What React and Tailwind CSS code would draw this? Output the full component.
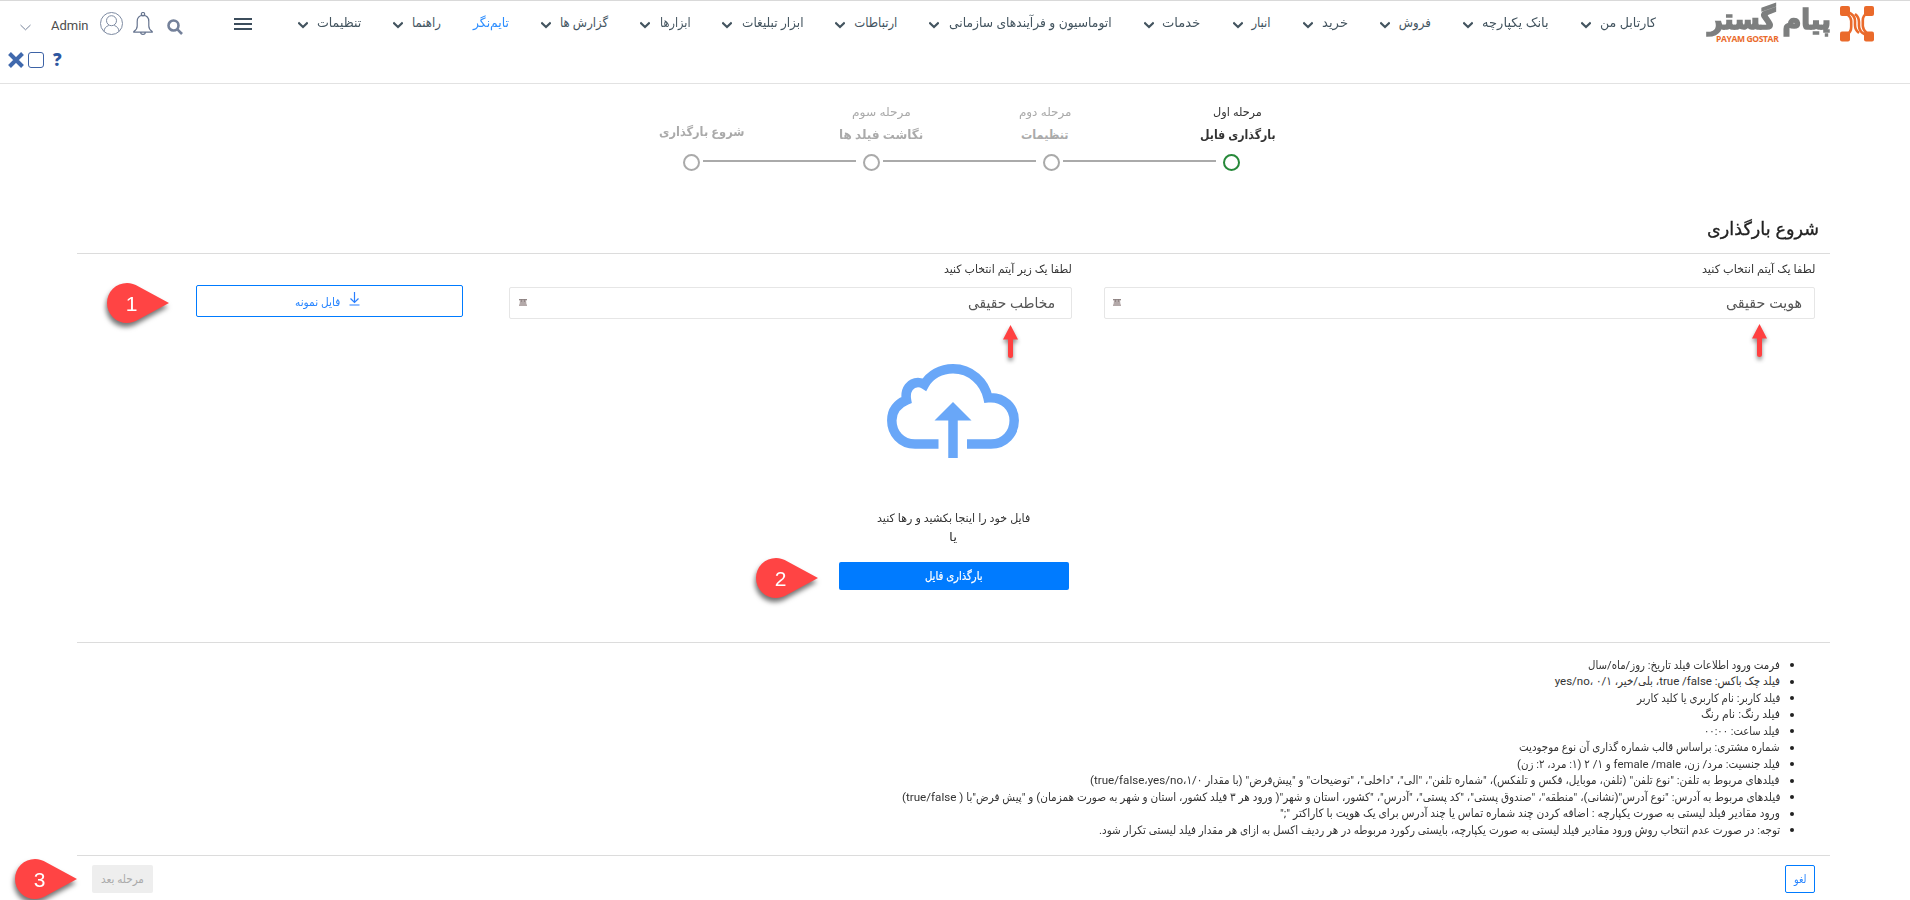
import { useLayoutEffect, useRef } from "react";

/* One line of text, condensed or widened to fill the width of its box. */
function Fit({ className = "", children }) {
  const box = useRef(null);
  const line = useRef(null);
  useLayoutEffect(() => {
    const fit = () => {
      const natural = line.current.offsetWidth;
      if (natural) line.current.style.transform = `scaleX(${box.current.clientWidth / natural})`;
    };
    fit();
    document.fonts?.ready.then(fit);
  }, []);
  return (
    <span ref={box} className={`block shrink-0 whitespace-nowrap ${className}`}>
      <span ref={line} className="inline-block origin-right">{children}</span>
    </span>
  );
}

const menu = [
  ["کارتابل من", "w-[56px]"],
  ["بانک یکپارچه", "w-[67px]"],
  ["فروش", "w-[32px]"],
  ["خرید", "w-[26px]"],
  ["انبار", "w-[19px]"],
  ["خدمات", "w-[38px]"],
  ["اتوماسیون و فرآیندهای سازمانی", "w-[163px]"],
  ["ارتباطات", "w-[43px]"],
  ["ابزار تبلیغات", "w-[62px]"],
  ["ابزارها", "w-[31px]"],
  ["گزارش ها", "w-[48px]"],
  ["تایم‌نگر", "w-[36px]", true],
  ["راهنما", "w-[29px]"],
  ["تنظیمات", "w-[44px]"],
];

const notes = [
  ["فرمت ورود اطلاعات فیلد تاریخ: روز/ماه/سال", "w-[192px]"],
  ["فیلد چک باکس: true /false، بلی/خیر، ۰/۱ ،yes/no", "w-[225px]"],
  ["فیلد کاربر: نام کاربری یا کلید کاربر", "w-[143px]"],
  ["فیلد رنگ: نام رنگ", "w-[79px]"],
  ["فیلد ساعت: ۰۰:۰۰", "w-[76px]"],
  ["شماره مشتری: براساس قالب شماره گذاری آن نوع موجودیت", "w-[261px]"],
  ["فیلد جنسیت: مرد/ زن، female /male و ۱/ ۲ (۱: مرد، ۲: زن)", "w-[263px]"],
  ['فیلدهای مربوط به تلفن: "نوع تلفن" (تلفن، موبایل، فکس و تلفکس)، "شماره تلفن"، "الی"، "داخلی"، "توضیحات" و "پیش‌فرض" (با مقدار true/false،yes/no،۱/۰)', "w-[690px]"],
  ['فیلدهای مربوط به آدرس: "نوع آدرس"(نشانی)، "منطقه"، "صندوق پستی"، "کد پستی"، "آدرس"، "کشور، استان و شهر"( ورود هر ۳ فیلد کشور، استان و شهر به صورت همزمان) و "پیش فرض"با ( true/false)', "w-[878px]"],
  ['ورود مقادیر فیلد لیستی به صورت یکپارچه : اضافه کردن چند شماره تماس یا چند آدرس برای یک هویت با کاراکتر ";"', "w-[500px]"],
  ["توجه: در صورت عدم انتخاب روش ورود مقادیر فیلد لیستی به صورت یکپارچه، بایستی رکورد مربوطه در هر ردیف اکسل به ازای هر مقدار فیلد لیستی تکرار شود.", "w-[681px]"],
];

function Chevron() {
  return (
    <svg className="mr-[9px] mt-[3px] h-2 w-[10px] shrink-0" viewBox="0 0 10 8" fill="none" stroke="#43545f" strokeWidth="2.2">
      <path d="M.3 1.500 5 6 9.700 1.500" />
    </svg>
  );
}

function Logo() {
  return (
    <div className="mt-[5px] flex h-[38px] w-[166px] shrink-0 gap-[9px]">
      <svg className="h-9 w-[34px] shrink-0" viewBox="0 0 34 36">
        <g fill="#ea6a2b">
          <rect width="10" height="10" rx="2" />
          <rect x="24" width="10" height="10" rx="2" />
          <rect y="25.500" width="10" height="10" rx="2" />
          <rect x="24" y="25.500" width="10" height="10" rx="2" />
        </g>
        <g fill="none" stroke="#ea6a2b" strokeWidth="2.600">
          <path d="M8 6Q15 9 15 15V19Q15 24 19 27" />
          <path d="M26 29Q19 26 19 20V16Q19 11 15 8" />
          <path d="M7 28.500Q11.200 26 11.200 21V15Q11 11 7 8" />
          <path d="M27 7Q22.800 10 22.800 14V20Q23 24 27 27.500" />
        </g>
      </svg>
      <div className="flex h-[38px] w-[123px] flex-col text-[#7d7f7f]">
        <Fit className="h-[28px] w-[123px] text-[28px] font-bold leading-[28px] [-webkit-text-stroke:1.500px_#7d7f7f]">پیام گستر</Fit>
        <div dir="ltr" className="ml-2 h-[10px] w-[115px] whitespace-nowrap font-['Open_Sans'] text-[8.500px] font-bold leading-[10px] tracking-[-0.350px] text-[#ea6a2b]">
          PAYAM GOSTAR
        </div>
      </div>
    </div>
  );
}

function Header() {
  return (
    <header className="h-[84px] border-b border-t border-b-[#e2e2e2] border-t-[#d9d9d9]">
      <div className="flex h-[46px] items-start pr-9">
        <Logo />
        <nav className="mr-[52px] flex h-11 items-center gap-[32.100px] text-[13px] leading-5 text-[#43545f]">
          {menu.map(([label, width, active]) => (
            <div key={label} className={`flex items-center ${active ? "text-[#2a8cff]" : ""}`}>
              <Fit className={width}>{label}</Fit>
              {!active && <Chevron />}
            </div>
          ))}
        </nav>
        <div className="mr-auto mt-[17px] flex h-3 w-[18px] flex-col justify-between">
          <i className="h-0.5 bg-[#3c4d5c]" /><i className="h-0.5 bg-[#3c4d5c]" /><i className="h-0.5 bg-[#3c4d5c]" />
        </div>
        <div className="mr-[51px] flex items-start pl-[20px]">
          <svg className="mt-[18px] h-4 w-4" viewBox="0 0 16 16" fill="none" stroke="#74819a" strokeWidth="2.600">
            <circle cx="6.500" cy="6.500" r="5" /><path d="m10.200 10.200 4.800 4.800" />
          </svg>
          <svg className="mr-[14px] mt-[11px] h-[23px] w-5" viewBox="0 0 20 23" fill="none" stroke="#66748f" strokeWidth="1.200">
            <circle cx="10" cy="2.200" r="1.700" />
            <path d="M10 3.400C6 3.400 4.200 6.200 4.200 9.500V14c0 2.500-1 4-3.400 5.500v.6h18.400v-.6C16.800 18 15.800 16.500 15.800 14V9.500C15.800 6.200 14 3.400 10 3.400ZM7.700 20.200a2.300 2.200 0 0 0 4.600 0" />
          </svg>
          <svg className="mr-[10px] mt-[11px] h-[23px] w-[23px]" viewBox="0 0 23 23" fill="none" stroke="#7e8ba2" strokeWidth="1">
            <circle cx="11.500" cy="11.500" r="11" />
            <circle cx="11.500" cy="8.700" r="5" />
            <path d="M4 19.500c.3-3.500 2-5 4.700-6M19 19.500c-.3-3.500-2-5-4.700-6" />
          </svg>
          <span className="mr-[11px] mt-[14px] font-[Roboto] text-[13px] leading-[22px] text-[#4d4d4d]">Admin</span>
          <svg className="mr-5 mt-[23px] h-[7px] w-[11px]" viewBox="0 0 11 7" fill="none" stroke="#77849a"><path d="m.5 1 5 4.800 5-4.800" /></svg>
        </div>
      </div>
      <div dir="ltr" className="flex h-[34px] items-start pl-2 pt-[5px]">
        <svg className="h-4 w-4" viewBox="0 0 16 16" stroke="#4069ad" strokeWidth="4"><path d="m1.500 1.500 13 13M14.500 1.500l-13 13" /></svg>
        <i className="ml-1 h-4 w-4 rounded-[3px] border-[1.500px] border-[#3d63a6]" />
        <span className="ml-[9px] font-['Open_Sans'] text-[17px] font-extrabold leading-[15px] text-[#2f57a0]">?</span>
      </div>
    </header>
  );
}

function Step({ top, topWidth, title, titleWidth, shift, current, last }) {
  return (
    <div className={`flex h-[71px] w-[180px] shrink-0 flex-col items-center ${current ? "text-[#333]" : "text-[#aaa]"}`}>
      <div className={`flex h-[52px] flex-col items-center ${shift}`}>
        {top ? <Fit className={`${topWidth} h-[22px] text-[11.500px] leading-[20px]`}>{top}</Fit> : <i className="h-[19px]" />}
        <Fit className={`${titleWidth} text-[12.500px] font-bold leading-[22px]`}>{title}</Fit>
      </div>
      <div className="flex w-[180px] items-center">
        <div className="w-[78.500px] shrink-0">
          {!current && <div className="mb-[3px] h-0.5 bg-[#aaa]" />}
        </div>
        <i className={`ml-[7px] mr-[3px] h-[17px] w-[17px] shrink-0 rounded-full border-2 ${current ? "border-[#27893a]" : "border-[#aaa]"}`} />
        <div className="w-[74.500px] shrink-0">
          {!last && <div className="mb-[3px] h-0.5 bg-[#aaa]" />}
        </div>
      </div>
    </div>
  );
}

function Rook() {
  return (
    <svg className="h-[7px] w-2" viewBox="0 0 8 7"><path d="M0 0h8v1.500H7L7.500 5.500H8V7H0V5.500h.5L1 1.500H0z" fill="#b3a9a9" /><path d="M0 .5h8M2.500 0v3M5.500 0v3" stroke="#8a8080" strokeWidth=".8" /></svg>
  );
}

function Select({ label, labelWidth, value, valueWidth, width, pad }) {
  return (
    <div className={width}>
      <Fit className={`${labelWidth} h-[33px] text-[11.500px] leading-[31px] text-[#333]`}>{label}</Fit>
      <div className={`flex h-8 items-center justify-between rounded-[2px] border border-[#e6e6e6] ${pad}`}>
        <Fit className={`${valueWidth} text-[15px] leading-[26px] text-[#555]`}>{value}</Fit>
        <div className="mb-[2px]"><Rook /></div>
      </div>
    </div>
  );
}

function Marker({ n, place }) {
  return (
    <div className={`absolute ${place} h-10 w-[62px] drop-shadow-[-1px_4px_2.500px_rgba(0,0,0,0.55)]`}>
      <svg className="absolute inset-0 h-10 w-[62px]" viewBox="0 0 62 40">
        <path d="M62 20 31.500 36.500C28 38.800 24 40 20 40a20 20 0 0 1 0-40c4 0 8 1.200 11.500 3.500Z" fill="#ff4444" />
      </svg>
      <span className="absolute left-0 top-0 w-[49px] text-center font-['Liberation_Sans'] text-[21px] leading-[41px] text-white">{n}</span>
    </div>
  );
}

function Arrow({ place }) {
  return (
    <svg className={`absolute ${place} h-[33px] w-[15px] overflow-visible drop-shadow-[0_3px_2px_rgba(0,0,0,0.45)]`} viewBox="0 0 15 33" fill="#ff4040">
      <path d="M7.500 0 15 14.500h-5V30.500a2.500 2.500 0 0 1-5 0V14.500H0Z" />
    </svg>
  );
}

function Cloud() {
  return (
    <svg className="h-[94px] w-[132px]" viewBox="0 0 132 94" fill="none" stroke="#69a7f8" strokeWidth="9.500">
      <path d="M51.500 80H28C14 80 4.800 69 4.800 56.500 4.800 47 10 40 19.500 36 17.500 25 24 18.500 31 18.500c2.500 0 4.500.7 6.500 2C43 10.500 54 4.800 66 4.800c18 0 31.500 13.200 35 29 16-1.500 26.200 10 26.200 22.700C127.200 69 118 80 104 80H80" />
      <path d="M66 94V52" />
      <path d="M66 38 84.500 56.500H47.500Z" fill="#69a7f8" stroke="none" />
    </svg>
  );
}

export default function App() {
  return (
    <div dir="rtl" className="relative h-[900px] w-[1910px] overflow-hidden bg-white font-[Roboto,'DejaVu_Sans_Condensed','DejaVu_Sans',sans-serif] text-[#333]">
      <Header />
      <section className="mr-[589px] flex pt-[18px]">
        <Step current top="مرحله اول" topWidth="w-[49px]" title="بارگذاری فایل" titleWidth="w-[76px]" shift="mr-[-13px]" />
        <Step top="مرحله دوم" topWidth="w-[52px]" title="تنظیمات" titleWidth="w-[47px]" shift="mr-[12px]" />
        <Step top="مرحله سوم" topWidth="w-[59px]" title="نگاشت فیلد ها" titleWidth="w-[84px]" shift="mr-[-20px]" />
        <Step last title="شروع بارگذاری" titleWidth="w-[85px]" shift="mr-[-22px]" />
      </section>
      <main className="ml-[77px] mr-20">
        <div className="h-[81px] border-b border-[#dcdcdc] pr-[11px] pt-[41px]">
          <Fit className="w-[112px] text-[18px] leading-[30px] text-[#222] [-webkit-text-stroke:0.300px_#222]">شروع بارگذاری</Fit>
        </div>
        <div className="flex h-[66px] pr-[15px]">
          <Select label="لطفا یک آیتم انتخاب کنید" labelWidth="w-[113px]" value="هویت حقیقی" valueWidth="w-[76px]" width="w-[711px]" pad="pl-2 pr-3" />
          <div className="w-8" />
          <Select label="لطفا یک زیر آیتم انتخاب کنید" labelWidth="w-[128px]" value="مخاطب حقیقی" valueWidth="w-[87px]" width="w-[563px]" pad="pl-[9px] pr-4" />
          <button className="mr-[46px] mt-[31px] flex h-8 w-[267px] items-center justify-center gap-2 rounded-[2px] border border-[#007bff] pr-[3px] text-[#2684ff]">
            <svg className="mb-1 h-[14px] w-[11px]" viewBox="0 0 11 14" fill="none" stroke="#287fff" strokeWidth="1.200"><path d="M5.500 0v10M1.500 6.500l4 4 4-4M.5 13h10" /></svg>
            <Fit className="mt-[2px] w-[45px] text-[11.500px] leading-5">فایل نمونه</Fit>
          </button>
        </div>
        <div className="flex h-[323px] flex-col items-center border-b border-[#dcdcdc] pt-[44px]">
          <div className="pr-[1px]"><Cloud /></div>
          <Fit className="mt-[51px] w-[153px] text-[11.500px] leading-[19px]">فایل خود را اینجا بکشید و رها کنید</Fit>
          <Fit className="w-[8px] text-[11.500px] leading-[19px]">یا</Fit>
          <button className="mt-[15px] flex h-7 w-[230px] items-center justify-center rounded-[2px] bg-[#007bff] text-white">
            <Fit className="w-[58px] text-[12px] font-medium leading-5 [-webkit-text-stroke:0.200px_white]">بارگذاری فایل</Fit>
          </button>
        </div>
        <ul className="h-[213px] border-b border-[#dcdcdc] pr-[36px] pt-[14px]">
          {notes.map(([text, width]) => (
            <li key={text} className="flex h-[16.500px] items-center">
              <i className="ml-[10px] h-1 w-1 rounded-full bg-[#222]" />
              <Fit className={`${width} mb-px text-[11.500px] leading-[16px]`}>{text}</Fit>
            </li>
          ))}
        </ul>
        <div className="flex justify-between pl-[15px] pr-[15px] pt-[9px]">
          <button className="flex h-7 w-[30px] items-center justify-center rounded-[2px] border border-[#007bff] text-[#2684ff]"><Fit className="w-[13px] text-[11.500px] leading-5">لغو</Fit></button>
          <button className="flex h-7 w-[61px] items-center justify-center rounded-[2px] bg-[#eee] text-[#aaa]"><Fit className="mb-px w-[43px] text-[11.500px] leading-5">مرحله بعد</Fit></button>
        </div>
      </main>
      <Arrow place="left-[1752px] top-[324px]" />
      <Arrow place="left-[1003px] top-[325px]" />
      <Marker n="1" place="left-[107px] top-[283px]" />
      <Marker n="2" place="left-[756px] top-[558px]" />
      <Marker n="3" place="left-[15px] top-[859px]" />
    </div>
  );
}
